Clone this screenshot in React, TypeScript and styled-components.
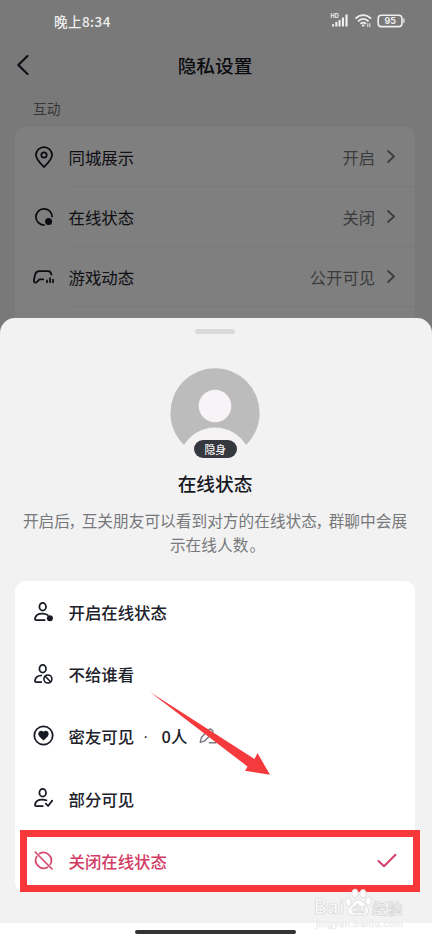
import React from "react";
import styled, { createGlobalStyle } from "styled-components";

const GlobalStyle = createGlobalStyle`
  *, *::before, *::after { box-sizing: border-box; }
  html, body { margin: 0; padding: 0; background: #fff; }
  body { font-family: "Noto Sans CJK SC", "Noto Sans", sans-serif; color: #161823; }
  svg { display: block; overflow: visible; flex: none; }
`;

const Screen = styled.div`
  position: relative;
  display: flex;
  flex-direction: column;
  width: 432px;
  height: 941px;
  overflow: hidden;
  background: #fff;
`;

const SettingsPage = styled.div`
  position: relative;
  flex: none;
  height: 337px;
  overflow: hidden;
  background: #f3f3f3;
`;

const Scrim = styled.div`
  position: absolute;
  inset: 0;
  background: rgba(0, 0, 0, 0.5);
`;

const StatusBar = styled.header`
  position: relative;
  z-index: 1;
  height: 42px;
  padding: 0 27px 0 54px;
  display: flex;
  align-items: center;
  justify-content: space-between;
  color: #eeeeee;
`;

const Clock = styled.span`
  font-size: 13.5px;
  line-height: 20px;
  font-weight: 500;
  letter-spacing: 0.45px;
`;

const Indicators = styled.div`
  display: flex;
  align-items: center;
`;

const NavBar = styled.nav`
  display: grid;
  grid-template-columns: 60px 1fr 60px;
  align-items: center;
  height: 48px;
  padding: 0 2px 2px 0;
`;

const BackButton = styled.button`
  border: 0;
  background: none;
  padding: 0 0 0 17px;
  color: inherit;
`;

const Title = styled.h1`
  margin: 0;
  text-align: center;
  font-size: 18.7px;
  line-height: 26px;
  font-weight: 500;
`;

const GroupLabel = styled.div`
  height: 37px;
  padding: 8px 0 0 33px;
  font-size: 13.7px;
  line-height: 20px;
  color: #6d6e72;
`;

const SettingsCard = styled.div`
  margin: 0 17px 0 15px;
  border-radius: 9px 9px 0 0;
  background: #fff;
`;

const SettingRow = styled.div`
  display: flex;
  align-items: center;
  height: 60px;
  padding-left: 16px;
`;

const SettingBody = styled.div`
  flex: 1;
  height: 60px;
  padding: 0 20px 1px 0;
  display: flex;
  align-items: center;
  box-shadow: inset 0 -1px #f3f3f3;
`;

const IconSlot = styled.span`
  width: 25px;
  margin-right: 12.5px;
  padding-bottom: 1px;
  display: flex;
  justify-content: center;
`;

const Label = styled.span<{ $active?: boolean }>`
  font-size: 16.4px;
  line-height: 24px;
  font-weight: 500;
  color: ${(p) => (p.$active ? "#d23b64" : "#20212a")};
`;

const SettingLabel = styled(Label)`
  font-weight: 400;
`;

const Dot = styled.span`
  width: 23.5px;
  margin-left: 4px;
  padding: 2px 0 0 5px;
  font: 400 16px/24px "Liberation Sans", sans-serif;
`;

const Value = styled.span`
  margin-left: auto;
  margin-right: 12px;
  font-size: 16.3px;
  line-height: 24px;
  color: #77787d;
`;

const Sheet = styled.section`
  position: relative;
  flex: none;
  height: 605px;
  margin-top: -19.5px;
  border-radius: 15px 15px 0 0;
  background: #f2f2f2;
  display: flex;
  flex-direction: column;
  align-items: center;
  padding: 11.5px 17px 0 15px;
`;

const Handle = styled.div`
  width: 40px;
  height: 4.5px;
  border-radius: 3px;
  background: #d9d9d9;
`;

const Avatar = styled.div`
  position: relative;
  width: 90px;
  height: 90px;
  margin-top: 35px;
`;

const Badge = styled.span`
  position: absolute;
  left: 24px;
  top: 71.5px;
  width: 42.5px;
  height: 18px;
  border-radius: 9px;
  background: #36383f;
  color: #f5f5f5;
  font-size: 10.8px;
  line-height: 18px;
  font-weight: 500;
  text-align: center;
`;

const SheetTitle = styled.h2`
  margin: 10.5px 0 0;
  font-size: 18.7px;
  line-height: 28px;
  font-weight: 500;
`;

const Description = styled.p`
  margin: 11.5px 0 0;
  text-align: center;
  white-space: nowrap;
  font-size: 15.7px;
  line-height: 24px;
  color: #77787b;
`;

const Mark = styled.span`
  margin-left: -1.5px;
  letter-spacing: -2.5px;
`;

const FullStop = styled.span`
  margin-left: 1px;
  letter-spacing: -5px;
`;

const Options = styled.div`
  align-self: stretch;
  height: 311px;
  margin-top: 24.5px;
  border-radius: 10px;
  background: #fff;
`;

const Option = styled.div`
  display: flex;
  align-items: center;
  height: 62.2px;
  padding: 0 18px 0 16px;
`;

const Edit = styled.span`
  margin-left: 12px;
  margin-top: -1px;
`;

const Tick = styled.span`
  margin-left: auto;
  margin-top: -1px;
`;

const HomeBar = styled.footer`
  flex: 1;
  display: flex;
  justify-content: center;
  padding: 7px 2px 0 0;
  background: #fff;
`;

const HomePill = styled.div`
  width: 161px;
  height: 4px;
  border-radius: 2px;
  background: #333;
`;

const Highlight = styled.div`
  position: absolute;
  left: 20px;
  top: 830px;
  width: 400px;
  height: 62px;
  border: 7px solid #f8383b;
`;

const Pointer = styled.svg`
  position: absolute;
  left: 150px;
  top: 692px;
`;

const Watermark = styled.div`
  position: absolute;
  left: 315px;
  top: 886px;
  width: 92px;
  height: 44px;
`;

const stroke = {
  fill: "none",
  stroke: "currentColor",
  strokeWidth: 1.75,
  strokeLinecap: "round" as const,
  strokeLinejoin: "round" as const,
};

const Chevron = () => (
  <svg width="8" height="13" viewBox="0 0 8 13" color="#77787d">
    <path d="M1 1 L7 6.5 L1 12" {...stroke} />
  </svg>
);

const PinIcon = () => (
  <svg width="18" height="22" viewBox="0 0 18 22">
    <path d="M9 21 C6 17.8 1 13.6 1 9 A8 8 0 0 1 17 9 C17 13.6 12 17.8 9 21 Z" {...stroke} />
    <circle cx="9" cy="9" r="2.7" {...stroke} />
  </svg>
);

const OnlineIcon = () => (
  <svg width="18" height="18" viewBox="0 0 18 18">
    <path d="M9 17 A8.1 8.1 0 1 1 17.1 8.5" {...stroke} />
    <circle cx="13.6" cy="13.5" r="3.5" fill="currentColor" />
  </svg>
);

const GameIcon = () => (
  <svg width="21" height="14" viewBox="0 0 21 14">
    <path d="M18.4 4.6 C18.1 2.3 17 1 15 1 H6.3 C3.9 1 2.7 2.2 2.2 4.3 L.9 10.3 C.5 12.6 2.8 13.4 4 11.8 L6.4 9.3 H10.3" {...stroke} />
    <path d="M14 10.4 V12.3 M17 8.2 V12.3 M20 9.5 V12.3" {...stroke} />
  </svg>
);

const PersonIcon = ({ kind }: { kind: "dot" | "block" | "check" }) => (
  <svg width="19" height="20" viewBox="0 0 19 20">
    <ellipse cx="8.7" cy="4.7" rx="3.3" ry="3.8" {...stroke} />
    {kind === "dot" && (
      <>
        <path d="M10.8 18.1 H2.2 Q.9 18.1 1 16.5 C1.5 13.3 4 11.5 8.2 11.5 C10.8 11.5 12.6 12.2 13.8 13.2" {...stroke} />
        <circle cx="15.9" cy="16.2" r="3" fill="currentColor" />
      </>
    )}
    {kind === "block" && (
      <>
        <path d="M7.2 18.1 H2.2 Q.9 18.1 1 16.5 C1.4 13.5 3.5 11.7 7.2 11.5" {...stroke} />
        <circle cx="13.9" cy="15" r="4" {...stroke} strokeWidth={1.6} />
        <path d="M11.2 12.3 L16.6 17.7" {...stroke} strokeWidth={1.6} />
      </>
    )}
    {kind === "check" && (
      <>
        <path d="M8.8 18.1 H2.2 Q.9 18.1 1 16.5 C1.5 13.3 4 11.5 8.2 11.5 C9.8 11.5 11.2 11.8 12.4 12.3" {...stroke} />
        <path d="M11.8 15.7 L14.1 18 L18.2 12.6" {...stroke} />
      </>
    )}
  </svg>
);

const HeartIcon = () => (
  <svg width="21" height="21" viewBox="0 0 21 21">
    <circle cx="10.5" cy="10.5" r="9.2" {...stroke} />
    <path d="M10.5 15.6 L6.3 11.4 C3.4 8.1 7.5 4 10.5 6.8 C13.5 4 17.6 8.1 14.7 11.4 Z" fill="currentColor" />
  </svg>
);

const OfflineIcon = () => (
  <svg width="19" height="19" viewBox="0 0 19 19" color="#d54b6f">
    <path d="M5.5 2.6 A7.9 7.9 0 0 1 16.3 13.3 M13.6 16.2 A7.9 7.9 0 0 1 2.8 5.4 M1.2 1 L18 18" {...stroke} />
  </svg>
);

const PencilIcon = () => (
  <svg width="18" height="16" viewBox="0 0 18 16" color="#77787d">
    <path d="M1.2 14.3 L2.4 9.4 L10 1.6 Q11.3 .5 12.5 1.7 L13.4 2.6 Q14.6 3.8 13.4 5 L5.8 12.8 Z M10.4 14.7 H17" {...stroke} strokeWidth={1.4} />
  </svg>
);

const settings = [
  { icon: <PinIcon />, label: "同城展示", value: "开启" },
  { icon: <OnlineIcon />, label: "在线状态", value: "关闭" },
  { icon: <GameIcon />, label: "游戏动态", value: "公开可见" },
];

export default function App() {
  return (
    <>
      <GlobalStyle />
      <Screen>
        <SettingsPage>
          <StatusBar>
            <Clock>晚上8:34</Clock>
            <Indicators>
              <svg width="74" height="16" viewBox="0 0 74 16" fill="currentColor">
                <text x="-0.5" y="5" fontSize="5.6" fontWeight="700" fontFamily="Inter, sans-serif">HD</text>
                <path d="M1 11.2h2.1v2.3H1zM4.3 9h2.1v4.5H4.3zM7.5 7h2.1v6.5H7.5zM10.9 4.5H13v9h-2.1zM14.4 1.5h2.2v12h-2.2z" />
                <g fill="none" stroke="currentColor" strokeWidth="1.8">
                  <path d="M24.5 5.6 C29 .9 35.5 .9 40 5.6 M27 8.3 C30.2 5.2 34.3 5.2 37.5 8.3 M29.5 10.8 C31.3 9.2 33.2 9.2 35 10.8" />
                </g>
                <path d="M30.5 12 Q32.2 10.8 34 12 L32.2 13.9zM36.3 10.3h1v3.7h-1zM38.3 10.3h1v3.7h-1zM72.2 5.5h1.3v4.2h-1.3z" />
                <rect x="47.2" y="2.3" width="23.7" height="11.3" rx="3.2" fill="none" stroke="currentColor" strokeWidth="1.6" />
                <text x="59.1" y="11.1" textAnchor="middle" fontSize="8.8" fontWeight="700" fontFamily="Inter, sans-serif">95</text>
              </svg>
            </Indicators>
          </StatusBar>
          <NavBar>
            <BackButton aria-label="返回">
              <svg width="12" height="20" viewBox="0 0 12 20">
                <path d="M10.5 1 L1.3 10 L10.5 19" {...stroke} strokeWidth={2.1} />
              </svg>
            </BackButton>
            <Title>隐私设置</Title>
          </NavBar>
          <GroupLabel>互动</GroupLabel>
          <SettingsCard>
            {settings.map((s) => (
              <SettingRow key={s.label}>
                <IconSlot>{s.icon}</IconSlot>
                <SettingBody>
                  <SettingLabel>{s.label}</SettingLabel>
                  <Value>{s.value}</Value>
                  <Chevron />
                </SettingBody>
              </SettingRow>
            ))}
            <SettingRow />
          </SettingsCard>
          <Scrim />
        </SettingsPage>

        <Sheet>
          <Handle />
          <Avatar>
            <svg width="90" height="90" viewBox="0 0 90 90">
              <path d="M14 76 A44.6 44.6 0 1 1 76 76 L45 60 Z" fill="#bcbcbc" />
              <path d="M14 76 A36.2 36.2 0 0 1 76 76 Q68 85 45 88 Q22 85 14 76Z" fill="#f4f2f3" />
              <circle cx="45" cy="37" r="16.3" fill="#f8f3f6" />
            </svg>
            <Badge>隐身</Badge>
          </Avatar>
          <SheetTitle>在线状态</SheetTitle>
          <Description>
            开启后<Mark>，</Mark>互关朋友可以看到对方的在线状态<Mark>，</Mark>群聊中会展
            <br />
            示在线人数<FullStop>。</FullStop>
          </Description>
          <Options>
            <Option>
              <IconSlot><PersonIcon kind="dot" /></IconSlot>
              <Label>开启在线状态</Label>
            </Option>
            <Option>
              <IconSlot><PersonIcon kind="block" /></IconSlot>
              <Label>不给谁看</Label>
            </Option>
            <Option>
              <IconSlot><HeartIcon /></IconSlot>
              <Label>密友可见</Label>
              <Dot>·</Dot>
              <Label>0人</Label>
              <Edit><PencilIcon /></Edit>
            </Option>
            <Option>
              <IconSlot><PersonIcon kind="check" /></IconSlot>
              <Label>部分可见</Label>
            </Option>
            <Option>
              <IconSlot><OfflineIcon /></IconSlot>
              <Label $active>关闭在线状态</Label>
              <Tick>
                <svg width="20" height="15" viewBox="0 0 20 15" color="#cf4268">
                  <path d="M1.5 8 L7 13.2 L18.5 1.8" {...stroke} strokeWidth={2} />
                </svg>
              </Tick>
            </Option>
          </Options>
        </Sheet>

        <HomeBar>
          <HomePill />
        </HomeBar>

        <Highlight />
        <Pointer width="120" height="83" viewBox="0 0 120 83">
          <path d="M0 0 L104.5 67 L107.5 61 L120 82.7 L95 78.7 L97.5 74.5 Z" fill="#f43a3d" />
        </Pointer>
        <Watermark>
          <svg width="92" height="44" viewBox="0 0 92 44" fill="#fff" stroke="#d4d4d4" strokeWidth="0.7">
            <text x="-1" y="28" fontSize="19.5" fontWeight="600" fontFamily="Inter, sans-serif" textLength="30">Bai</text>
            <ellipse cx="33.3" cy="16" rx="2.9" ry="4" />
            <ellipse cx="40" cy="7.3" rx="3" ry="4.2" />
            <ellipse cx="48" cy="7.6" rx="3" ry="4.2" />
            <ellipse cx="53.5" cy="15" rx="2.9" ry="4" />
            <path d="M43.5 14 C48 14 49.5 18.5 52 21 C55.5 25 52.5 29.8 48 29.2 Q43.5 28.5 39 29.2 C33 29.5 31 24.5 35.3 20.7 C38 18 39.5 14 43.5 14Z" />
            <text x="36.5" y="27" fontSize="11.5" fontWeight="700" fontFamily="Inter, sans-serif" textLength="14">du</text>
            <text x="57" y="27.5" fontSize="15.2" fontWeight="500" fontFamily="Noto Sans CJK SC, sans-serif">经验</text>
            <text x="1" y="40.5" fontSize="9.5" fontFamily="Liberation Sans, sans-serif" textLength="87" stroke="#e8e8e8" strokeWidth="0.5">jingyan.baidu.com</text>
          </svg>
        </Watermark>
      </Screen>
    </>
  );
}
